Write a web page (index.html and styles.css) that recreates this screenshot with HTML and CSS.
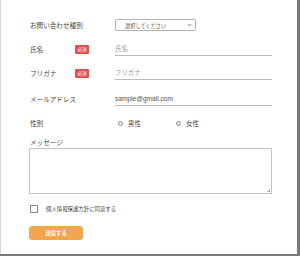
FILE: index.html
```html
<!DOCTYPE html>
<html lang="ja">
<head>
    <meta charset="UTF-8">
    <meta name="viewport" content="width=device-width, initial-scale=1.0">
    <title>お問い合わせ</title>
    <link rel="stylesheet" href="styles.css">
</head>
<body>

<div class="card">
    <form class="contact">
        <div class="row row-first">
            <div class="label">お問い合わせ種別</div>
            <div class="field">
                <div class="select">
                    <span>選択してください</span>
                    <svg class="caret" width="5" height="4" viewBox="0 0 5 4"><path d="M0.8 1 L2.5 2.8 L4.2 1" fill="none" stroke="#666" stroke-width="0.8"/></svg>
                </div>
            </div>
        </div>

        <div class="row">
            <div class="label">氏名<span class="badge">必須</span></div>
            <div class="field"><div class="input placeholder">氏名</div></div>
        </div>

        <div class="row">
            <div class="label">フリガナ<span class="badge">必須</span></div>
            <div class="field"><div class="input placeholder">フリガナ</div></div>
        </div>

        <div class="row row-mail">
            <div class="label">メールアドレス</div>
            <div class="field"><div class="input latin">sample@gmail.com</div></div>
        </div>

        <div class="row">
            <div class="label">性別</div>
            <div class="field radios">
                <span class="radio"><i></i>男性</span>
                <span class="radio"><i></i>女性</span>
            </div>
        </div>

        <div class="message-label">メッセージ</div>
        <div class="textarea"></div>

        <div class="agree">
            <span class="check"></span>
            <span>個人情報保護方針に同意する</span>
        </div>

        <div class="submit">送信する</div>
    </form>
</div>

</body>
</html>
```
FILE: styles.css
```css
body {
    margin: 0;
    background-color: #7a7a7a;
    font-family: "Noto Sans CJK JP", "Noto Sans", sans-serif;
    color: #444444;
}
.card {
    width: 296px;
    height: 254px;
    background-color: #ffffff;
    border-left: 1px solid #d6d6d6;
    overflow: hidden;
}
.contact {
    padding-left: 28px;
    padding-top: 17px;
}
.row {
    display: flex;
    align-items: center;
    height: 16px;
    margin-top: 8px;
}
.row-first {
    margin-top: 0;
}
.row-mail {
    margin-top: 10px;
}
.label {
    width: 86px;
    display: flex;
    align-items: center;
    font-size: 6.6px;
    line-height: 1;
    padding-left: 1px;
    box-sizing: border-box;
}
.badge {
    display: inline-flex;
    align-items: center;
    justify-content: center;
    width: 14px;
    height: 9px;
    margin-left: auto;
    margin-right: 26px;
    background-color: #e2504c;
    color: #ffffff;
    font-size: 4.6px;
    border-radius: 1px;
}
.field {
    width: 157px;
}
.select {
    width: 81px;
    height: 12px;
    box-sizing: border-box;
    border: 1px solid #b4b4b4;
    border-radius: 2px;
    display: flex;
    align-items: center;
    padding: 0 3px 0 9px;
    font-size: 5.2px;
    color: #555555;
}
.select .caret {
    margin-left: auto;
}
.input {
    height: 14px;
    box-sizing: border-box;
    border-bottom: 1px solid #b9b9b9;
    font-size: 6.4px;
    line-height: 13px;
    color: #555555;
}
.input.latin {
    font-family: "Liberation Sans", Arial, sans-serif;
    font-size: 6.6px;
}
.input.placeholder {
    color: #9a9a9a;
}
.radios {
    display: flex;
    font-size: 6.4px;
}
.radio {
    display: flex;
    align-items: center;
    width: 55px;
    padding-left: 3px;
}
.radio i {
    width: 3px;
    height: 3px;
    border: 1px solid #888888;
    border-radius: 50%;
    margin-right: 5px;
}
.message-label {
    font-size: 6.6px;
    line-height: 10px;
    margin-top: 6px;
    padding-left: 1px;
}
.textarea {
    width: 243px;
    height: 46px;
    box-sizing: border-box;
    margin-top: 1px;
    border: 1px solid #c4c4c4;
    position: relative;
}
.textarea::after {
    content: "";
    position: absolute;
    right: 1px;
    bottom: 1px;
    width: 3px;
    height: 3px;
    border-right: 1px solid #aaaaaa;
    border-bottom: 1px solid #aaaaaa;
    box-sizing: border-box;
}
.agree {
    display: flex;
    align-items: center;
    height: 14px;
    margin-top: 8px;
    font-size: 5.4px;
}
.check {
    width: 8px;
    height: 8px;
    box-sizing: border-box;
    border: 1px solid #8a8a8a;
    margin-left: 1px;
    margin-right: 8px;
}
.submit {
    width: 54px;
    height: 14px;
    margin-top: 10px;
    border-radius: 3px;
    background-color: #f2a54a;
    color: #ffffff;
    font-size: 5.4px;
    font-weight: bold;
    display: flex;
    align-items: center;
    justify-content: center;
}
```
